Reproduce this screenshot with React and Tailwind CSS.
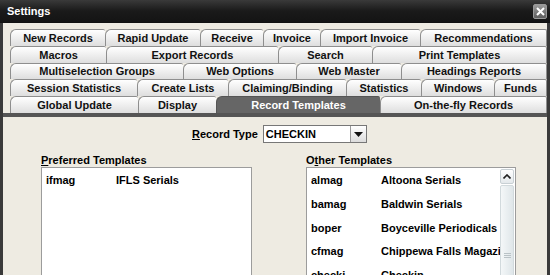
const rows = [
  [
    ["New Records", 95],
    ["Rapid Update", 95],
    ["Receive", 63],
    ["Invoice", 57],
    ["Import Invoice", 100],
    ["Recommendations", 127],
  ],
  [
    ["Macros", 96],
    ["Export Records", 172],
    ["Search", 94],
    ["Print Templates", 175],
  ],
  [
    ["Multiselection Groups", 173],
    ["Web Options", 113],
    ["Web Master", 105],
    ["Headings Reports", 146],
  ],
  [
    ["Session Statistics", 127],
    ["Create Lists", 91],
    ["Claiming/Binding", 118],
    ["Statistics", 75],
    ["Windows", 73],
    ["Funds", 53],
  ],
  [
    ["Global Update", 128],
    ["Display", 78],
    ["Record Templates", 164],
    ["On-the-fly Records", 167],
  ],
];

const others = [
  ["almag", "Altoona Serials"],
  ["bamag", "Baldwin Serials"],
  ["boper", "Boyceville Periodicals"],
  ["cfmag", "Chippewa Falls Magazines"],
  ["checki", "Checkin"],
];

function Tab({ label, width, last }) {
  const selected = label === "Record Templates";
  return (
    <div
      style={{ width }}
      className={`flex items-center justify-center rounded-tl-[6px] rounded-tr-[2px] border-t border-l ${
        last ? "border-r" : ""
      } ${
        selected
          ? "border-[#555] bg-[#666666] text-white"
          : "border-[#8e8e8e] bg-gradient-to-b from-[#ffffff] to-[#dedede] text-[#111]"
      }`}
    >
      {label}
    </div>
  );
}

function TemplateList({ items, scroll }) {
  return (
    <div className="flex h-[120px] border border-[#9c9c9c] bg-white">
      <div className="flex-1 overflow-hidden pt-[1px]">
        {items.map(([code, name]) => (
          <div key={code} className="flex h-[23.7px] items-center whitespace-nowrap">
            <span className="w-[74px] shrink-0 pl-[4px]">{code}</span>
            <span>{name}</span>
          </div>
        ))}
      </div>
      {scroll && (
        <div className="flex w-[15px] flex-col pt-[1px] pr-[1px]">
          <div className="flex h-[15px] items-center justify-center rounded-[2px] border border-[#c8d0d4] bg-gradient-to-b from-[#ffffff] to-[#e4e9ec]">
            <svg width="8" height="5" viewBox="0 0 8 5">
              <path d="M0.5 4.5 L4 1 L7.5 4.5" fill="none" stroke="#222" strokeWidth="1.6" />
            </svg>
          </div>
          <div className="mt-[1px] flex flex-1 flex-col items-center rounded-[2px] border border-[#d2dadd] bg-gradient-to-r from-[#f4f7f8] to-[#dfe6e9] pt-[67px]">
            <div className="h-[1px] w-[7px] bg-[#b9c2c6]" />
            <div className="mt-[1px] h-[1px] w-[7px] bg-[#b9c2c6]" />
            <div className="mt-[1px] h-[1px] w-[7px] bg-[#b9c2c6]" />
          </div>
        </div>
      )}
    </div>
  );
}

export default function App() {
  return (
    <div className="flex h-[275px] w-[550px] flex-col overflow-hidden bg-[#2e2e2e] font-['Liberation_Sans',Arial,sans-serif] text-[11px] font-bold leading-none">
      {/* title bar */}
      <div className="flex h-[23px] shrink-0 items-center justify-between border-b border-[#111] bg-gradient-to-b from-[#3a3a3a] via-[#1a1a1a] to-[#141414] pl-[7px] pr-[3px] text-white">
        <span>Settings</span>
        <div className="flex h-[15px] w-[14px] items-center justify-center rounded-[2px] border border-[#999] bg-gradient-to-b from-[#9a9a9a] to-[#5e5e5e]">
          <svg width="9" height="9" viewBox="0 0 9 9">
            <path d="M1 1 L8 8 M8 1 L1 8" stroke="#fff" strokeWidth="2" />
          </svg>
        </div>
      </div>

      <div className="flex flex-1 flex-col border-l-[3px] border-r-[3px] border-[#3a3a3a] bg-[#eeebe2]">
        {/* tab rows */}
        <div className="flex flex-col pt-[6px] pl-[7px]">
          {rows.map((row, i) => (
            <div key={i} className={`flex ${i === 2 ? "h-[16px]" : "h-[17px]"}`}>
              {row.map(([label, width], j) => (
                <Tab key={label} label={label} width={width} last={j === row.length - 1} />
              ))}
            </div>
          ))}
        </div>

        {/* content */}
        <div className="flex-1 border-t-[4px] border-[#555]">
          <div className="flex items-center pt-[8px] pl-[189px]">
            <span className="pr-[5px]">
              <span className="underline">R</span>ecord Type
            </span>
            <div className="flex h-[18px] w-[104px] border border-[#777] bg-white">
              <span className="flex flex-1 items-center pl-[2px]">CHECKIN</span>
              <div className="flex w-[16px] items-center justify-center border-l border-[#999] bg-gradient-to-b from-[#ffffff] to-[#dcdcdc]">
                <svg width="9" height="5" viewBox="0 0 9 5">
                  <path d="M0 0 H9 L4.5 5 Z" fill="#111" />
                </svg>
              </div>
            </div>
          </div>

          <div className="flex pt-[12px] pl-[38px]">
            <div className="w-[211px]">
              <div className="h-[12px]">
                <span className="underline">P</span>referred Templates
              </div>
              <TemplateList items={[["ifmag", "IFLS Serials"]]} />
            </div>
            <div className="ml-[54px] w-[210px]">
              <div className="h-[12px]">
                O<span className="underline">t</span>her Templates
              </div>
              <TemplateList items={others} scroll />
            </div>
          </div>
        </div>
      </div>
    </div>
  );
}
